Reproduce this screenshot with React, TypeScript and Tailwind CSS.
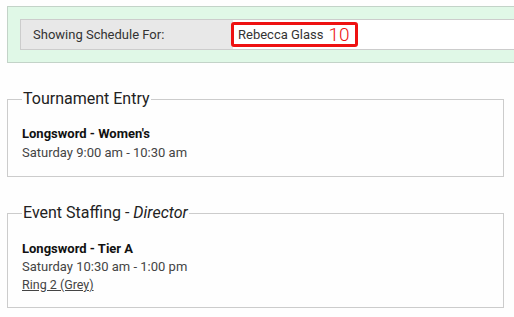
import React from 'react';

function Section({
  title,
  role,
  className,
  children,
}: {
  title: string;
  role?: string;
  className: string;
  children: React.ReactNode;
}) {
  return (
    <fieldset className={`w-[497px] border border-[#cccccc] px-[14px] ${className}`}>
      <legend className="px-[1px] text-[16px] leading-[18px] text-[#222]">
        {title}
        {role && (
          <>
            {' - '}
            <i>{role}</i>
          </>
        )}
      </legend>
      {children}
    </fieldset>
  );
}

export default function App() {
  return (
    <div
      className="min-h-[317px] w-[514px] overflow-hidden bg-[#fefefe] pl-[7px] pt-[6px] text-[#333]"
      style={{ fontFamily: 'Roboto, "Liberation Sans", sans-serif' }}
    >
      <div className="w-[520px] border border-[#c3d3c8] bg-[#e0f8e7] p-[12px]">
        <div className="flex h-[31px] border-y border-l border-[#cccccc]">
          <div className="flex w-[212px] items-center bg-[#e8e8e8] pl-[12px] text-[13px] text-[#333]">
            Showing Schedule For:
          </div>
          <div className="flex flex-1 items-center bg-white">
            <div className="ml-[-2px] flex h-[25px] items-center gap-[5px] rounded-[3px] border-[3px] border-[#ee1111] pl-[4px] pr-[5px]">
              <span className="text-[13px] text-[#333]">Rebecca Glass</span>
              <span className="text-[19px] font-light leading-none text-[#ee1111]">10</span>
            </div>
          </div>
        </div>
      </div>

      <div className="mt-[27px]">
        <Section title="Tournament Entry" className="pt-[16px] pb-[14px]">
          <div className="text-[13px] font-bold leading-[19px] text-[#111]">Longsword - Women's</div>
          <div className="text-[13px] leading-[19px] text-[#444]">Saturday 9:00 am - 10:30 am</div>
        </Section>
      </div>

      <div className="mt-[27px]">
        <Section title="Event Staffing" role="Director" className="pt-[18px] pb-[14px]">
          <div className="text-[13px] font-bold leading-[18px] text-[#111]">Longsword - Tier A</div>
          <div className="text-[13px] leading-[18px] text-[#444]">Saturday 10:30 am - 1:00 pm</div>
          <a href="#" className="block w-fit text-[12.5px] leading-[17px] text-[#444] underline">
            Ring 2 (Grey)
          </a>
        </Section>
      </div>
    </div>
  );
}
